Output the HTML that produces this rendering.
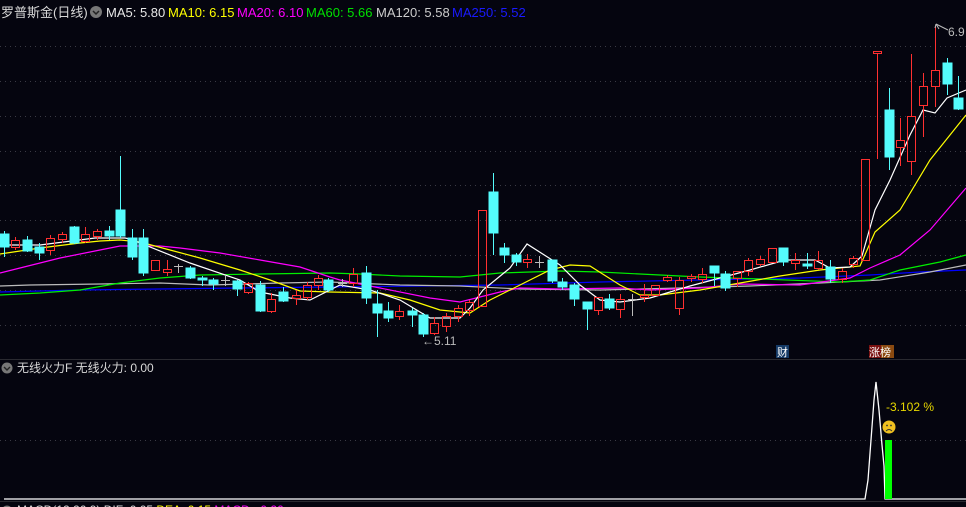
<!DOCTYPE html>
<html><head><meta charset="utf-8"><style>
body{margin:0;background:#05050f;width:966px;height:507px;overflow:hidden;font-family:"Liberation Sans","Noto Sans CJK SC",sans-serif}
svg{display:block}
</style></head><body>
<svg width="966" height="507" viewBox="0 0 966 507" xmlns="http://www.w3.org/2000/svg" font-family="Liberation Sans, Noto Sans CJK SC, sans-serif">
<rect width="966" height="507" fill="#05050f"/>
<g stroke="#3a3a44" stroke-dasharray="1 4" stroke-width="1">
<line x1="0" y1="46.5" x2="966" y2="46.5"/><line x1="0" y1="81.5" x2="966" y2="81.5"/><line x1="0" y1="116.5" x2="966" y2="116.5"/><line x1="0" y1="151.5" x2="966" y2="151.5"/><line x1="0" y1="185.5" x2="966" y2="185.5"/><line x1="0" y1="220.5" x2="966" y2="220.5"/><line x1="0" y1="255.5" x2="966" y2="255.5"/><line x1="0" y1="290.5" x2="966" y2="290.5"/><line x1="0" y1="325.5" x2="966" y2="325.5"/><line x1="0" y1="440.5" x2="966" y2="440.5"/>
</g>
<line x1="0" y1="359.5" x2="966" y2="359.5" stroke="#2a2a30"/>
<line x1="0" y1="501.5" x2="966" y2="501.5" stroke="#2a2a30"/>
<text x="1" y="17" font-size="13" fill="#d8d8d8">罗普斯金(日线)</text>
<circle cx="96" cy="12" r="6" fill="#777"/><path d="M93 11l3 3 3-3" stroke="#222" fill="none" stroke-width="1.5"/>
<text y="17" font-size="13"><tspan x="106" fill="#e8e8e8">MA5: 5.80</tspan><tspan x="168" fill="#ffff00">MA10: 6.15</tspan><tspan x="237" fill="#ff00ff">MA20: 6.10</tspan><tspan x="306" fill="#00e000">MA60: 5.66</tspan><tspan x="376" fill="#cccccc">MA120: 5.58</tspan><tspan x="452" fill="#1a1aff">MA250: 5.52</tspan></text>
<g fill="none" stroke-width="1.2">
<polyline stroke="#0000ff" points="0,292 80,290 160,289 240,288 330,287 420,286 500,285 600,282 700,280 800,278 870,275 920,272 966,270"/>
<polyline stroke="#bbbbbb" points="0,286 30,285 100,284 160,283 210,285 280,283 330,282 400,285 460,286 520,289 600,290 680,288 750,286 820,283 880,280 930,272 966,265"/>
<polyline stroke="#00ee00" points="0,295 40,293 80,290 120,283 160,278 200,275 260,274 330,273 360,274 400,276 460,277 500,273 560,271 600,272 640,274 700,277 760,279 840,282 870,280 900,270 940,262 966,255"/>
<polyline stroke="#ff00ff" points="0,273 20,268 60,258 100,250 120,246 160,246 180,248 220,253 260,260 300,267 330,277 340,280 380,288 430,298 460,302 480,297 500,292 520,288 560,289 620,288 650,290 700,288 740,284 800,285 850,278 870,268 900,255 930,230 966,188"/>
<polyline stroke="#ffff00" points="0,254 40,248 80,243 100,241 120,240 140,242 170,250 200,258 240,270 270,280 300,291 330,292 380,293 410,300 440,310 470,313 490,300 520,285 550,270 570,265 590,266 620,285 640,295 660,295 700,290 740,283 780,276 820,270 860,266 875,232 900,210 930,160 966,115"/>
<polyline stroke="#ffffff" points="0,245 40,245 95,238 125,238 130,239 190,263 240,280 260,292 290,298 310,300 328,291 340,285 370,290 400,300 430,318 460,318 470,308 483,290 510,268 527,244 560,265 580,285 600,300 620,302 650,298 660,295 690,286 720,278 750,270 785,260 815,260 830,268 850,267 862,256 875,210 890,180 910,135 923,110 935,113 947,98 966,90"/>
</g>
<g fill="#54fcfc" stroke="#54fcfc" shape-rendering="crispEdges">
<line x1="4.5" y1="231" x2="4.5" y2="257"/><rect x="0" y="234" width="9" height="13"/>
<line x1="27.5" y1="236" x2="27.5" y2="252"/><rect x="23" y="240" width="9" height="11"/>
<line x1="39.5" y1="243" x2="39.5" y2="260"/><rect x="35" y="247" width="9" height="6"/>
<line x1="74.5" y1="226" x2="74.5" y2="244"/><rect x="70" y="227" width="9" height="16"/>
<line x1="109.5" y1="226" x2="109.5" y2="240"/><rect x="105" y="231" width="9" height="5"/>
<line x1="120.5" y1="156" x2="120.5" y2="238"/><rect x="116" y="210" width="9" height="26"/>
<line x1="132.5" y1="229" x2="132.5" y2="260"/><rect x="128" y="238" width="9" height="19"/>
<line x1="143.5" y1="229" x2="143.5" y2="276"/><rect x="139" y="238" width="9" height="35"/>
<line x1="190.5" y1="266" x2="190.5" y2="279"/><rect x="186" y="268" width="9" height="10"/>
<line x1="202.5" y1="276" x2="202.5" y2="286"/><rect x="198" y="278" width="9" height="2"/>
<line x1="213.5" y1="278" x2="213.5" y2="290"/><rect x="209" y="280" width="9" height="4"/>
<line x1="237.5" y1="280" x2="237.5" y2="296"/><rect x="233" y="281" width="9" height="8"/>
<line x1="260.5" y1="281" x2="260.5" y2="312"/><rect x="256" y="285" width="9" height="26"/>
<line x1="283.5" y1="287" x2="283.5" y2="302"/><rect x="279" y="292" width="9" height="9"/>
<line x1="328.5" y1="278" x2="328.5" y2="292"/><rect x="324" y="280" width="9" height="10"/>
<line x1="366.5" y1="266" x2="366.5" y2="304"/><rect x="362" y="273" width="9" height="25"/>
<line x1="377.5" y1="290" x2="377.5" y2="337"/><rect x="373" y="304" width="9" height="9"/>
<line x1="388.5" y1="302" x2="388.5" y2="322"/><rect x="384" y="311" width="9" height="7"/>
<line x1="412.5" y1="308" x2="412.5" y2="327"/><rect x="408" y="311" width="9" height="4"/>
<line x1="423.5" y1="313" x2="423.5" y2="337"/><rect x="419" y="315" width="9" height="19"/>
<line x1="493.5" y1="173" x2="493.5" y2="255"/><rect x="489" y="192" width="9" height="41"/>
<line x1="504.5" y1="243" x2="504.5" y2="263"/><rect x="500" y="248" width="9" height="7"/>
<line x1="516.5" y1="253" x2="516.5" y2="266"/><rect x="512" y="255" width="9" height="7"/>
<line x1="552.5" y1="260" x2="552.5" y2="283"/><rect x="548" y="260" width="9" height="21"/>
<line x1="562.5" y1="278" x2="562.5" y2="290"/><rect x="558" y="282" width="9" height="5"/>
<line x1="574.5" y1="283" x2="574.5" y2="306"/><rect x="570" y="285" width="9" height="14"/>
<line x1="587.5" y1="302" x2="587.5" y2="330"/><rect x="583" y="302" width="9" height="7"/>
<line x1="609.5" y1="294" x2="609.5" y2="310"/><rect x="605" y="299" width="9" height="9"/>
<line x1="714.5" y1="266" x2="714.5" y2="286"/><rect x="710" y="266" width="9" height="7"/>
<line x1="725.5" y1="271" x2="725.5" y2="291"/><rect x="721" y="274" width="9" height="14"/>
<line x1="783.5" y1="248" x2="783.5" y2="266"/><rect x="779" y="248" width="9" height="14"/>
<line x1="807.5" y1="253" x2="807.5" y2="269"/><rect x="803" y="264" width="9" height="2"/>
<line x1="830.5" y1="260" x2="830.5" y2="283"/><rect x="826" y="267" width="9" height="12"/>
<line x1="889.5" y1="88" x2="889.5" y2="170"/><rect x="885" y="110" width="9" height="47"/>
<line x1="947.5" y1="58" x2="947.5" y2="95"/><rect x="943" y="63" width="9" height="21"/>
<line x1="958.5" y1="76" x2="958.5" y2="110"/><rect x="954" y="98" width="9" height="11"/>
</g>
<g fill="none" stroke="#ff3030" stroke-width="1.3" shape-rendering="crispEdges">
<path d="M15.5 237V240M15.5 247V250M50.5 235V238M50.5 250V255M62.5 232V234M62.5 239V243M85.5 227V234M85.5 241V243M97.5 229V231M97.5 236V240M167.5 260V269M167.5 272V276M248.5 282V283M248.5 292V294M271.5 293V299M271.5 311V313M296.5 290V295M296.5 298V305M307.5 282V285M307.5 297V300M318.5 275V278M318.5 285V290M353.5 268V274M353.5 283V287M399.5 305V311M399.5 316V320M434.5 317V323M434.5 333V335M446.5 313V316M446.5 326V332M458.5 305V308M458.5 316V322M469.5 300V302M469.5 310V316M527.5 254V259M527.5 262V268M598.5 310V315M620.5 294V299M620.5 309V318M644.5 284V295M644.5 297V302M667.5 275V277M667.5 280V282M679.5 277V280M679.5 308V315M691.5 274V276M691.5 278V282M702.5 268V274M702.5 279V283M737.5 278V287M748.5 258V260M748.5 271V276M760.5 256V259M760.5 264V266M795.5 253V260M795.5 263V270M818.5 251V260M818.5 268V270M842.5 268V271M842.5 279V283M853.5 256V258M853.5 264V268M877.5 53V159M900.5 118V140M900.5 147V166M911.5 54V116M911.5 161V175M923.5 73V86M923.5 105V137M935.5 26V70M935.5 86V107"/>
<rect x="11.5" y="240.5" width="8" height="7"/><rect x="46.5" y="238.5" width="8" height="12"/><rect x="58.5" y="234.5" width="8" height="5"/><rect x="81.5" y="234.5" width="8" height="7"/><rect x="93.5" y="231.5" width="8" height="5"/><rect x="151.5" y="260.5" width="8" height="10"/><rect x="163.5" y="269.5" width="8" height="3"/><rect x="244.5" y="283.5" width="8" height="9"/><rect x="267.5" y="299.5" width="8" height="12"/><rect x="292.5" y="295.5" width="8" height="3"/><rect x="303.5" y="285.5" width="8" height="12"/><rect x="314.5" y="278.5" width="8" height="7"/><rect x="349.5" y="274.5" width="8" height="9"/><rect x="395.5" y="311.5" width="8" height="5"/><rect x="430.5" y="323.5" width="8" height="10"/><rect x="442.5" y="316.5" width="8" height="10"/><rect x="454.5" y="308.5" width="8" height="8"/><rect x="465.5" y="302.5" width="8" height="8"/><rect x="478.5" y="210.5" width="8" height="96"/><rect x="523.5" y="259.5" width="8" height="3"/><rect x="594.5" y="297.5" width="8" height="13"/><rect x="616.5" y="299.5" width="8" height="10"/><rect x="640.5" y="295.5" width="8" height="2"/><rect x="651.5" y="285.5" width="8" height="10"/><rect x="663.5" y="277.5" width="8" height="3"/><rect x="675.5" y="280.5" width="8" height="28"/><rect x="687.5" y="276.5" width="8" height="2"/><rect x="698.5" y="274.5" width="8" height="5"/><rect x="733.5" y="271.5" width="8" height="7"/><rect x="744.5" y="260.5" width="8" height="11"/><rect x="756.5" y="259.5" width="8" height="5"/><rect x="768.5" y="248.5" width="8" height="14"/><rect x="791.5" y="260.5" width="8" height="3"/><rect x="814.5" y="260.5" width="8" height="8"/><rect x="838.5" y="271.5" width="8" height="8"/><rect x="849.5" y="258.5" width="8" height="6"/><rect x="861.5" y="159.5" width="8" height="101"/><rect x="873.5" y="51.5" width="8" height="2"/><rect x="896.5" y="140.5" width="8" height="7"/><rect x="907.5" y="116.5" width="8" height="45"/><rect x="919.5" y="86.5" width="8" height="19"/><rect x="931.5" y="70.5" width="8" height="16"/>
</g>
<g stroke="#bbbbbb" shape-rendering="crispEdges">
<path d="M174 266.5h9M178.5 264V273M221 280.5h9M225.5 276V286M338 283.5h9M342.5 279V287M535 262.5h9M539.5 256V268M628 299.5h9M632.5 294V316"/>
</g>
<text x="422" y="345" font-size="12" fill="#bbbbbb">←5.11</text>
<path d="M936 24l3 5M936 24l-1 4M936 24l12 6" stroke="#bbb" fill="none"/>
<text x="948" y="36" font-size="12" fill="#bbbbbb">6.9</text>
<rect x="776" y="345" width="13" height="13" fill="#153a66"/><text x="777" y="356" font-size="11" fill="#fff">财</text>
<rect x="869" y="345" width="12" height="13" fill="#7a1010"/><rect x="881" y="345" width="13" height="13" fill="#8a4a10"/><text x="869" y="356" font-size="11" fill="#fff">涨榜</text>
<circle cx="7" cy="368" r="5.5" fill="#777"/><path d="M4 367l3 3 3-3" stroke="#222" fill="none" stroke-width="1.4"/>
<text x="17" y="372" font-size="12" fill="#d8d8d8">无线火力F  无线火力: 0.00</text>
<polyline fill="none" stroke="#fff" stroke-width="1.3" points="4,499 865,499 868,480 871,440 874,400 876,382 879,410 882,445 884,466 885,499 966,499"/>
<rect x="885" y="440" width="7" height="59" fill="#00ff00"/>
<text x="886" y="411" font-size="12" fill="#e8d800">-3.102  %</text>
<circle cx="889" cy="427" r="6.5" fill="#f0c020"/><circle cx="887" cy="425.5" r="0.9" fill="#333"/><circle cx="891" cy="425.5" r="0.9" fill="#333"/><path d="M886 431q3-3 6 0" stroke="#333" fill="none" stroke-width="0.9"/>
<circle cx="7" cy="511" r="5.5" fill="#777"/>
<text x="17" y="514" font-size="12"><tspan fill="#d8d8d8">MACD(12,26,9)  DIF: 0.05 </tspan><tspan fill="#ffff00">DEA: 0.15 </tspan><tspan fill="#ff00ff">MACD: -0.20</tspan></text>
</svg>
</body></html>
